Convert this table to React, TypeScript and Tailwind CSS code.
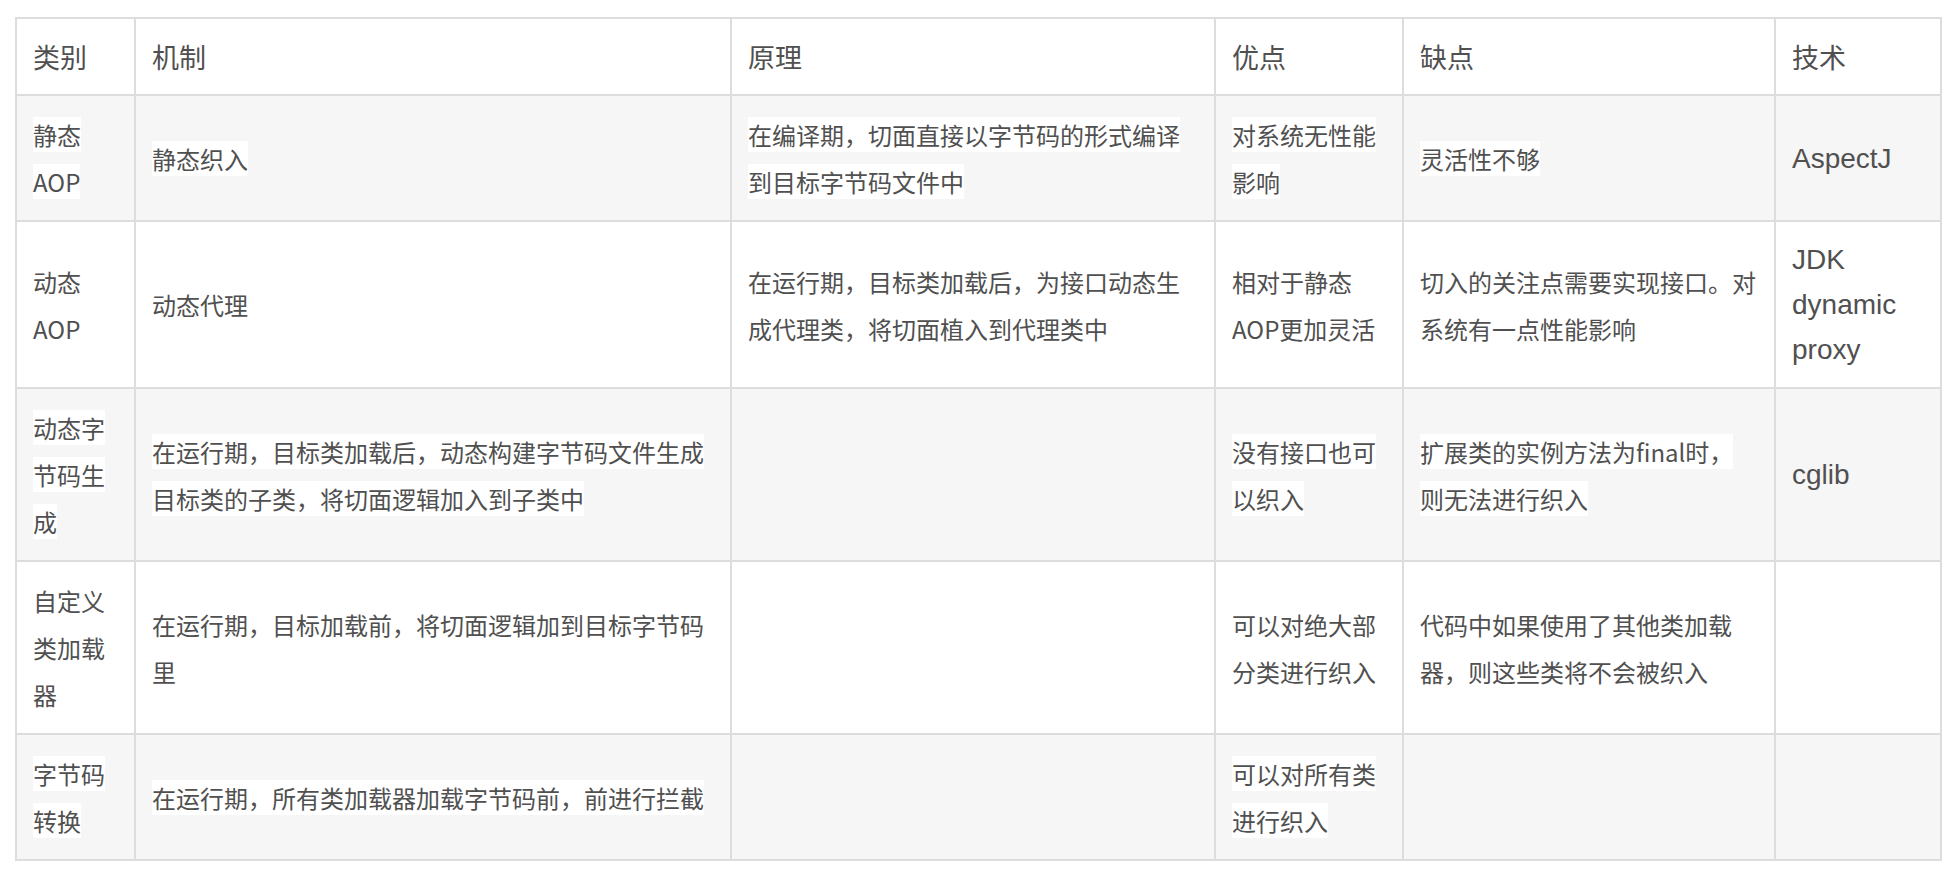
import React from 'react';

type Row = {
  cells: string[][];
  shaded: boolean;
};

const headers = ['类别', '机制', '原理', '优点', '缺点', '技术'];

const colWidths = ['w-[119px]', 'w-[596px]', 'w-[484px]', 'w-[188px]', 'w-[372px]', 'w-[166px]'];

const rows: Row[] = [
  {
    shaded: true,
    cells: [
      ['静态', 'AOP'],
      ['静态织入'],
      ['在编译期，切面直接以字节码的形式编译', '到目标字节码文件中'],
      ['对系统无性能', '影响'],
      ['灵活性不够'],
      ['AspectJ'],
    ],
  },
  {
    shaded: false,
    cells: [
      ['动态', 'AOP'],
      ['动态代理'],
      ['在运行期，目标类加载后，为接口动态生', '成代理类，将切面植入到代理类中'],
      ['相对于静态', 'AOP更加灵活'],
      ['切入的关注点需要实现接口。对', '系统有一点性能影响'],
      ['JDK', 'dynamic', 'proxy'],
    ],
  },
  {
    shaded: true,
    cells: [
      ['动态字', '节码生', '成'],
      ['在运行期，目标类加载后，动态构建字节码文件生成', '目标类的子类，将切面逻辑加入到子类中'],
      [],
      ['没有接口也可', '以织入'],
      ['扩展类的实例方法为final时，', '则无法进行织入'],
      ['cglib'],
    ],
  },
  {
    shaded: false,
    cells: [
      ['自定义', '类加载', '器'],
      ['在运行期，目标加载前，将切面逻辑加到目标字节码', '里'],
      [],
      ['可以对绝大部', '分类进行织入'],
      ['代码中如果使用了其他类加载', '器，则这些类将不会被织入'],
      [],
    ],
  },
  {
    shaded: true,
    cells: [
      ['字节码', '转换'],
      ['在运行期，所有类加载器加载字节码前，前进行拦截'],
      [],
      ['可以对所有类', '进行织入'],
      [],
      [],
    ],
  },
];

const Lines: React.FC<{ lines: string[]; highlight: boolean }> = ({ lines, highlight }) => (
  <span className={highlight ? 'bg-white' : ''}>
    {lines.map((line, i) => (
      <React.Fragment key={i}>
        {i > 0 && <br />}
        {line}
      </React.Fragment>
    ))}
  </span>
);

export default function App() {
  return (
    <div className="min-h-screen bg-white pl-[15px] pt-[17px] text-[#505050] font-['Noto_Sans_CJK_SC',sans-serif]">
      <table className="table-fixed border-collapse w-[1925px]">
        <colgroup>
          {colWidths.map((w, i) => (
            <col key={i} className={w} />
          ))}
        </colgroup>
        <thead>
          <tr className="bg-white">
            {headers.map((h) => (
              <th
                key={h}
                className="border-2 border-[#dddddd] px-[16px] py-[15px] text-left align-middle font-normal text-[27px] leading-[45px] whitespace-nowrap"
              >
                {h}
              </th>
            ))}
          </tr>
        </thead>
        <tbody>
          {rows.map((row, r) => (
            <tr key={r} className={row.shaded ? 'bg-[#f6f6f6]' : 'bg-white'}>
              {row.cells.map((cell, c) =>
                c === 5 ? (
                  // 技术 column uses a latin face
                  <td
                    key={c}
                    className="border-2 border-[#dddddd] px-[16px] py-[15px] align-middle whitespace-nowrap text-[28px] leading-[45px] font-['Liberation_Sans',Arial,sans-serif]"
                  >
                    <Lines lines={cell} highlight={false} />
                  </td>
                ) : (
                  <td
                    key={c}
                    className="border-2 border-[#dddddd] px-[16px] py-[15px] align-middle whitespace-nowrap text-[24px] leading-[47px]"
                  >
                    {cell.length > 0 && <Lines lines={cell} highlight={row.shaded} />}
                  </td>
                )
              )}
            </tr>
          ))}
        </tbody>
      </table>
    </div>
  );
}
